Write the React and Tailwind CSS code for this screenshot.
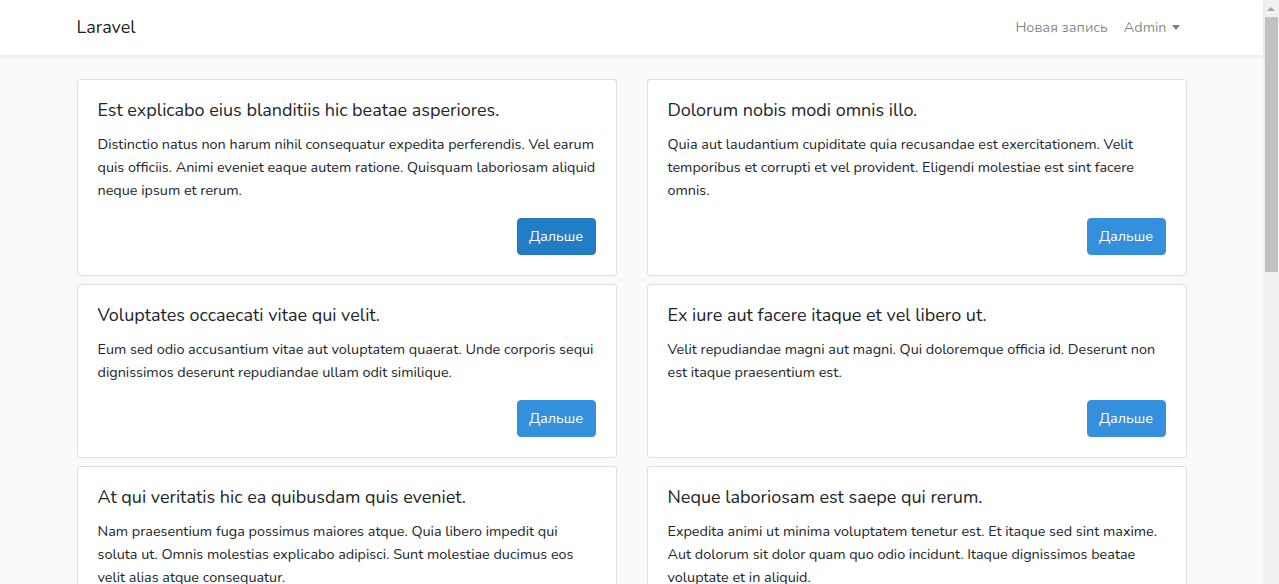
import React from 'react';

const posts = [
  {
    title: 'Est explicabo eius blanditiis hic beatae asperiores.',
    lines: [
      'Distinctio natus non harum nihil consequatur expedita perferendis. Vel earum',
      'quis officiis. Animi eveniet eaque autem ratione. Quisquam laboriosam aliquid',
      'neque ipsum et rerum.',
    ],
    active: true,
  },
  {
    title: 'Dolorum nobis modi omnis illo.',
    lines: [
      'Quia aut laudantium cupiditate quia recusandae est exercitationem. Velit',
      'temporibus et corrupti et vel provident. Eligendi molestiae est sint facere',
      'omnis.',
    ],
  },
  {
    title: 'Voluptates occaecati vitae qui velit.',
    lines: [
      'Eum sed odio accusantium vitae aut voluptatem quaerat. Unde corporis sequi',
      'dignissimos deserunt repudiandae ullam odit similique.',
    ],
  },
  {
    title: 'Ex iure aut facere itaque et vel libero ut.',
    lines: [
      'Velit repudiandae magni aut magni. Qui doloremque officia id. Deserunt non',
      'est itaque praesentium est.',
    ],
  },
  {
    title: 'At qui veritatis hic ea quibusdam quis eveniet.',
    lines: [
      'Nam praesentium fuga possimus maiores atque. Quia libero impedit qui',
      'soluta ut. Omnis molestias explicabo adipisci. Sunt molestiae ducimus eos',
      'velit alias atque consequatur.',
    ],
  },
  {
    title: 'Neque laboriosam est saepe qui rerum.',
    lines: [
      'Expedita animi ut minima voluptatem tenetur est. Et itaque sed sint maxime.',
      'Aut dolorum sit dolor quam quo odio incidunt. Itaque dignissimos beatae',
      'voluptate et in aliquid.',
    ],
  },
];

const PostCard = ({ post }) => (
  <div className="bg-white border border-black/[0.125] rounded-[4px] px-5 pt-5 pb-5 flex flex-col">
    <h5 className="text-[18px] leading-[20px] h-[22px] mb-[11px] whitespace-nowrap">{post.title}</h5>
    <p className="text-[14.4px] leading-[23px] mb-4">
      {post.lines.map((line, i) => (
        <span key={i} className="block whitespace-nowrap">{line}</span>
      ))}
    </p>
    <div className="mt-auto flex justify-end">
      <button
        className={`w-[79px] h-[37px] rounded-[4px] text-white text-[14.4px] flex items-center justify-center ${
          post.active ? 'bg-[#227dc7] border border-[#2176bd]' : 'bg-[#3490dc] border border-[#3490dc]'
        }`}
      >
        Дальше
      </button>
    </div>
  </div>
);

export default function App() {
  return (
    <div className="flex h-[584px] overflow-hidden text-[#212529] font-['Nunito','Lato',sans-serif]">
      <div className="flex-1 bg-[#f8fafc] flex flex-col">
        {/* Navbar */}
        <nav className="h-[55px] bg-white shadow-[0_2px_4px_rgba(0,0,0,0.075)] relative z-10 shrink-0">
          <div className="w-[1110px] mx-auto h-full flex items-center justify-between">
            <span className="text-[18px] text-black/90">Laravel</span>
            <div className="flex items-center text-[14.4px] text-black/50">
              <span className="px-2">Новая запись</span>
              <span className="pl-2 pr-[7px] flex items-center">
                Admin
                <span className="ml-[5px] w-0 h-0 border-l-[4.5px] border-r-[4.5px] border-t-[5px] border-l-transparent border-r-transparent border-t-black/50" />
              </span>
            </div>
          </div>
        </nav>

        {/* Posts */}
        <main className="pt-6">
          <div className="w-[1110px] mx-auto grid grid-cols-2 gap-x-[30px] gap-y-2">
            {posts.map((post, i) => (
              <PostCard key={i} post={post} />
            ))}
          </div>
        </main>
      </div>

      {/* Scrollbar */}
      <div className="w-[16px] bg-[#f1f1f1] flex flex-col items-center shrink-0">
        <div className="h-[17px] flex items-center justify-center">
          <span className="w-0 h-0 border-l-[4px] border-r-[4px] border-b-[4px] border-l-transparent border-r-transparent border-b-[#a3a3a3]" />
        </div>
        <div className="w-[13px] h-[255px] bg-[#c1c1c1]" />
      </div>
    </div>
  );
}
